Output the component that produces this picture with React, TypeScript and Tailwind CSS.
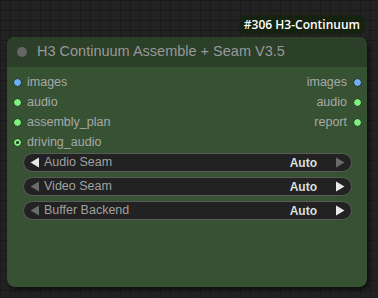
const inputs = [
  { name: "images", color: "bg-[#6cb2f0]", hollow: false },
  { name: "audio", color: "bg-[#7ef07e]", hollow: false },
  { name: "assembly_plan", color: "bg-[#7ef07e]", hollow: false },
  { name: "driving_audio", color: "bg-[#7ef07e]", hollow: true },
];

const outputs = [
  { name: "images", color: "bg-[#6cb2f0]" },
  { name: "audio", color: "bg-[#7ef07e]" },
  { name: "report", color: "bg-[#7ef07e]" },
];

const widgets = [
  { label: "Audio Seam", value: "Auto", leftOn: true, rightOn: false },
  { label: "Video Seam", value: "Auto", leftOn: false, rightOn: true },
  { label: "Buffer Backend", value: "Auto", leftOn: false, rightOn: true },
];

function Arrow({ dir, on }: { dir: "left" | "right"; on: boolean }) {
  const fill = on ? "#e8e8e8" : "#6a6a6a";
  return (
    <svg width="10" height="11" viewBox="0 0 10 11">
      {dir === "left" ? (
        <polygon points="9,0.5 9,10.5 0.5,5.5" fill={fill} />
      ) : (
        <polygon points="1,0.5 1,10.5 9.5,5.5" fill={fill} />
      )}
    </svg>
  );
}

export default function App() {
  return (
    <div
      className="w-[378px] h-[298px] overflow-hidden bg-[#222222] bg-[linear-gradient(#1a1a1a_1px,transparent_1px),linear-gradient(90deg,#1a1a1a_1px,transparent_1px)] bg-[size:10px_10px] font-['Liberation_Sans',Arial,sans-serif]"
    >
      <div className="flex flex-col pl-[7px] w-[367px]">
        <div className="h-[37px] flex justify-end items-start pt-[15px] pr-[2px]">
          <div className="h-[19px] px-[5px] rounded-[6px] bg-[#15220f] text-white text-[12px] font-semibold leading-[19px] font-['Open_Sans',sans-serif]">
            #306 H3-Continuum
          </div>
        </div>

        <div className="h-[250px] rounded-[8px] bg-[#375233] shadow-[2px_3px_4px_rgba(0,0,0,0.55)] flex flex-col">
          <div className="h-[30px] rounded-t-[8px] bg-[#2b3f29] flex items-center">
            <div className="ml-[10px] w-[10px] h-[10px] rounded-full bg-[#666666]" />
            <span className="ml-[10px] text-[14.5px] text-[#999999] whitespace-nowrap">
              H3 Continuum Assemble + Seam V3.5
            </span>
          </div>

          <div className="flex justify-between pt-[5px]">
            <div className="flex flex-col">
              {inputs.map((s) => (
                <div key={s.name} className="h-[20px] flex items-center pl-[6px]">
                  <div
                    className={`w-[9px] h-[9px] rounded-full ${s.color} border border-[#1e2a1c] flex items-center justify-center`}
                  >
                    {s.hollow && <div className="w-[3px] h-[3px] rounded-full bg-[#1e2a1c]" />}
                  </div>
                  <span className="ml-[5px] text-[12.5px] text-[#a8a8a8]">{s.name}</span>
                </div>
              ))}
            </div>
            <div className="flex flex-col">
              {outputs.map((s) => (
                <div key={s.name} className="h-[20px] flex items-center justify-end pr-[5px]">
                  <span className="mr-[6px] text-[12.5px] text-[#a8a8a8]">{s.name}</span>
                  <div className={`w-[9px] h-[9px] rounded-full ${s.color} border border-[#1e2a1c]`} />
                </div>
              ))}
            </div>
          </div>

          <div className="flex flex-col gap-[5px] mt-[1px] pl-[16px] pr-[15px]">
            {widgets.map((w) => (
              <div
                key={w.label}
                className="h-[19px] rounded-full bg-[#222222] border border-[#5a5a5a] flex items-center pl-[6px] pr-[6px]"
              >
                <Arrow dir="left" on={w.leftOn} />
                <span className="ml-[4px] text-[12.5px] text-[#a0a0a0]">{w.label}</span>
                <span className="ml-auto mr-[18px] text-[12px] font-bold text-[#dddddd]">{w.value}</span>
                <Arrow dir="right" on={w.rightOn} />
              </div>
            ))}
          </div>
        </div>
      </div>
    </div>
  );
}
